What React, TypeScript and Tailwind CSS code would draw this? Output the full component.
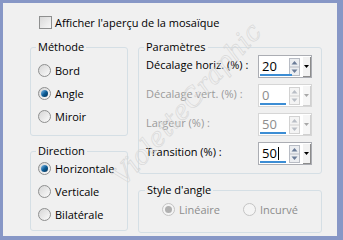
import React from "react";

function Radio({ checked, disabled }: { checked?: boolean; disabled?: boolean }) {
  return (
    <span
      className={`flex w-[13px] h-[13px] shrink-0 items-center justify-center rounded-full border ${
        disabled ? "border-[#c4c4c4] bg-[#f4f4f4]" : "border-[#8e8f8f] bg-gradient-to-br from-[#d6d6d6] to-[#fbfbfb]"
      }`}
    >
      {checked && (
        <span
          className={`w-[7px] h-[7px] rounded-full ${
            disabled ? "bg-[#b0b0b0]" : "bg-gradient-to-br from-[#7fc3f0] via-[#0d5f99] to-[#062f52]"
          }`}
        />
      )}
    </span>
  );
}

function RadioRow({ label, checked, disabled }: { label: string; checked?: boolean; disabled?: boolean }) {
  return (
    <div className="flex items-center h-[13px] gap-[4px]">
      <Radio checked={checked} disabled={disabled} />
      <span className={disabled ? "text-[#8d8d8d]" : "text-black"}>{label}</span>
    </div>
  );
}

function SpinBox({ value, bar, disabled, caret }: { value: string; bar: number; disabled?: boolean; caret?: boolean }) {
  const arrow = disabled ? "#b9bec6" : "#6b7c98";
  return (
    <div
      className={`relative flex items-center w-[54px] h-[23px] border bg-white ${
        disabled ? "border-[#d6d6d6]" : "border-[#abadb3]"
      }`}
    >
      <div className="flex items-center w-[30px] pl-[3px] h-full">
        <span className={`text-[13px] leading-none ${disabled ? "text-[#8d8d8d]" : "text-black"}`}>{value}</span>
        {caret && <span className="ml-[1px] w-px h-[13px] bg-black" />}
      </div>
      <svg width="11" height="18" viewBox="0 0 11 18" className="shrink-0">
        <rect x="0.5" y="0.5" width="10" height="17" fill={disabled ? "#f4f4f4" : "#eceef1"} stroke={disabled ? "#d2d2d2" : "#b8bcc4"} />
        <line x1="1" y1="9" x2="10" y2="9" stroke={disabled ? "#d2d2d2" : "#b8bcc4"} />
        <path d="M2.5 6.5 L5.5 3 L8.5 6.5 Z" fill={arrow} />
        <path d="M2.5 11.5 L5.5 15 L8.5 11.5 Z" fill={arrow} />
      </svg>
      <div
        className={`ml-[3px] flex w-[8px] h-[20px] items-center justify-center border-r border-b ${
          disabled ? "border-[#d0d0d0] bg-[#f6f6f6]" : "border-[#8c8c8c] bg-[#f2f2f2]"
        }`}
      >
        <svg width="5" height="3" viewBox="0 0 5 3">
          <path d="M0 0 L5 0 L2.5 3 Z" fill={disabled ? "#a8a8a8" : "#000"} />
        </svg>
      </div>
      <div className="absolute left-[1px] bottom-[1px] h-[2px] bg-[#3c8dd4]" style={{ width: bar }} />
    </div>
  );
}

function ParamRow({ label, value, bar, disabled, caret }: { label: string; value: string; bar: number; disabled?: boolean; caret?: boolean }) {
  return (
    <div className="flex items-center justify-between h-[23px]">
      <span className={`pb-[4px] ${disabled ? "text-[#9a9a9a]" : "text-black"}`}>{label}</span>
      <SpinBox value={value} bar={bar} disabled={disabled} caret={caret} />
    </div>
  );
}

export default function App() {
  return (
    <div className="relative w-[343px] h-[240px] overflow-hidden border-l-[3px] border-t-[3px] border-r-[6px] border-b-[4px] border-[#8797c6] bg-[#f0f0f0] font-['Open_Sans',sans-serif] text-[11px] leading-[16px] text-black">
      <div className="pl-[27px] pr-[15px] pt-[13px]">
        {/* checkbox */}
        <div className="flex items-center gap-[3px] pl-[9px] h-[13px]">
          <span className="w-[13px] h-[13px] border border-[#8e8f8f] bg-gradient-to-br from-[#d9d9d9] to-[#f7f7f7]" />
          <span>Afficher l'aperçu de la mosaïque</span>
        </div>

        <div className="flex gap-[10px] mt-[10px]">
          {/* left column */}
          <div className="flex flex-col w-[98px] gap-[7px]">
            <fieldset className="h-[97px] min-w-0 border border-[#d5dfe5] rounded-[3px]">
              <legend className="ml-[5px] px-[2px]">Méthode</legend>
              <div className="flex flex-col gap-[10px] pt-[9px] pl-[7px]">
                <RadioRow label="Bord" />
                <RadioRow label="Angle" checked />
                <RadioRow label="Miroir" />
              </div>
            </fieldset>
            <fieldset className="h-[88px] min-w-0 border border-[#d5dfe5] rounded-[3px]">
              <legend className="ml-[5px] px-[2px]">Direction</legend>
              <div className="flex flex-col gap-[10px] pt-[3px] pl-[7px]">
                <RadioRow label="Horizontale" checked />
                <RadioRow label="Verticale" />
                <RadioRow label="Bilatérale" />
              </div>
            </fieldset>
          </div>

          {/* right column */}
          <div className="flex flex-col w-[184px] gap-[8px]">
            <fieldset className="h-[135px] min-w-0 border border-[#d5dfe5] rounded-[3px]">
              <legend className="ml-[5px] px-[2px]">Paramètres</legend>
              <div className="flex flex-col gap-[6px] pl-[7px] pr-[9px]">
                <ParamRow label="Décalage horiz. (%) :" value="20" bar={32} />
                <ParamRow label="Décalage vert. (%) :" value="0" bar={26} disabled />
                <ParamRow label="Largeur (%) :" value="50" bar={26} disabled />
                <ParamRow label="Transition (%) :" value="50" bar={26} caret />
              </div>
            </fieldset>
            <fieldset className="h-[51px] min-w-0 border border-[#d5dfe5] rounded-[3px]">
              <legend className="ml-[6px] px-[2px]">Style d'angle</legend>
              <div className="flex items-center pt-[5px] pl-[23px]">
                <div className="w-[81px]">
                  <RadioRow label="Linéaire" checked disabled />
                </div>
                <RadioRow label="Incurvé" disabled />
              </div>
            </fieldset>
          </div>
        </div>
      </div>

      {/* watermark */}
      <span className="pointer-events-none absolute left-[80px] top-[88px] -rotate-[48deg] font-['DejaVu_Serif',serif] italic text-[26px] leading-none text-transparent [-webkit-text-stroke:0.6px_#d6d6d6]">
        VioletteGraphic
      </span>
    </div>
  );
}
